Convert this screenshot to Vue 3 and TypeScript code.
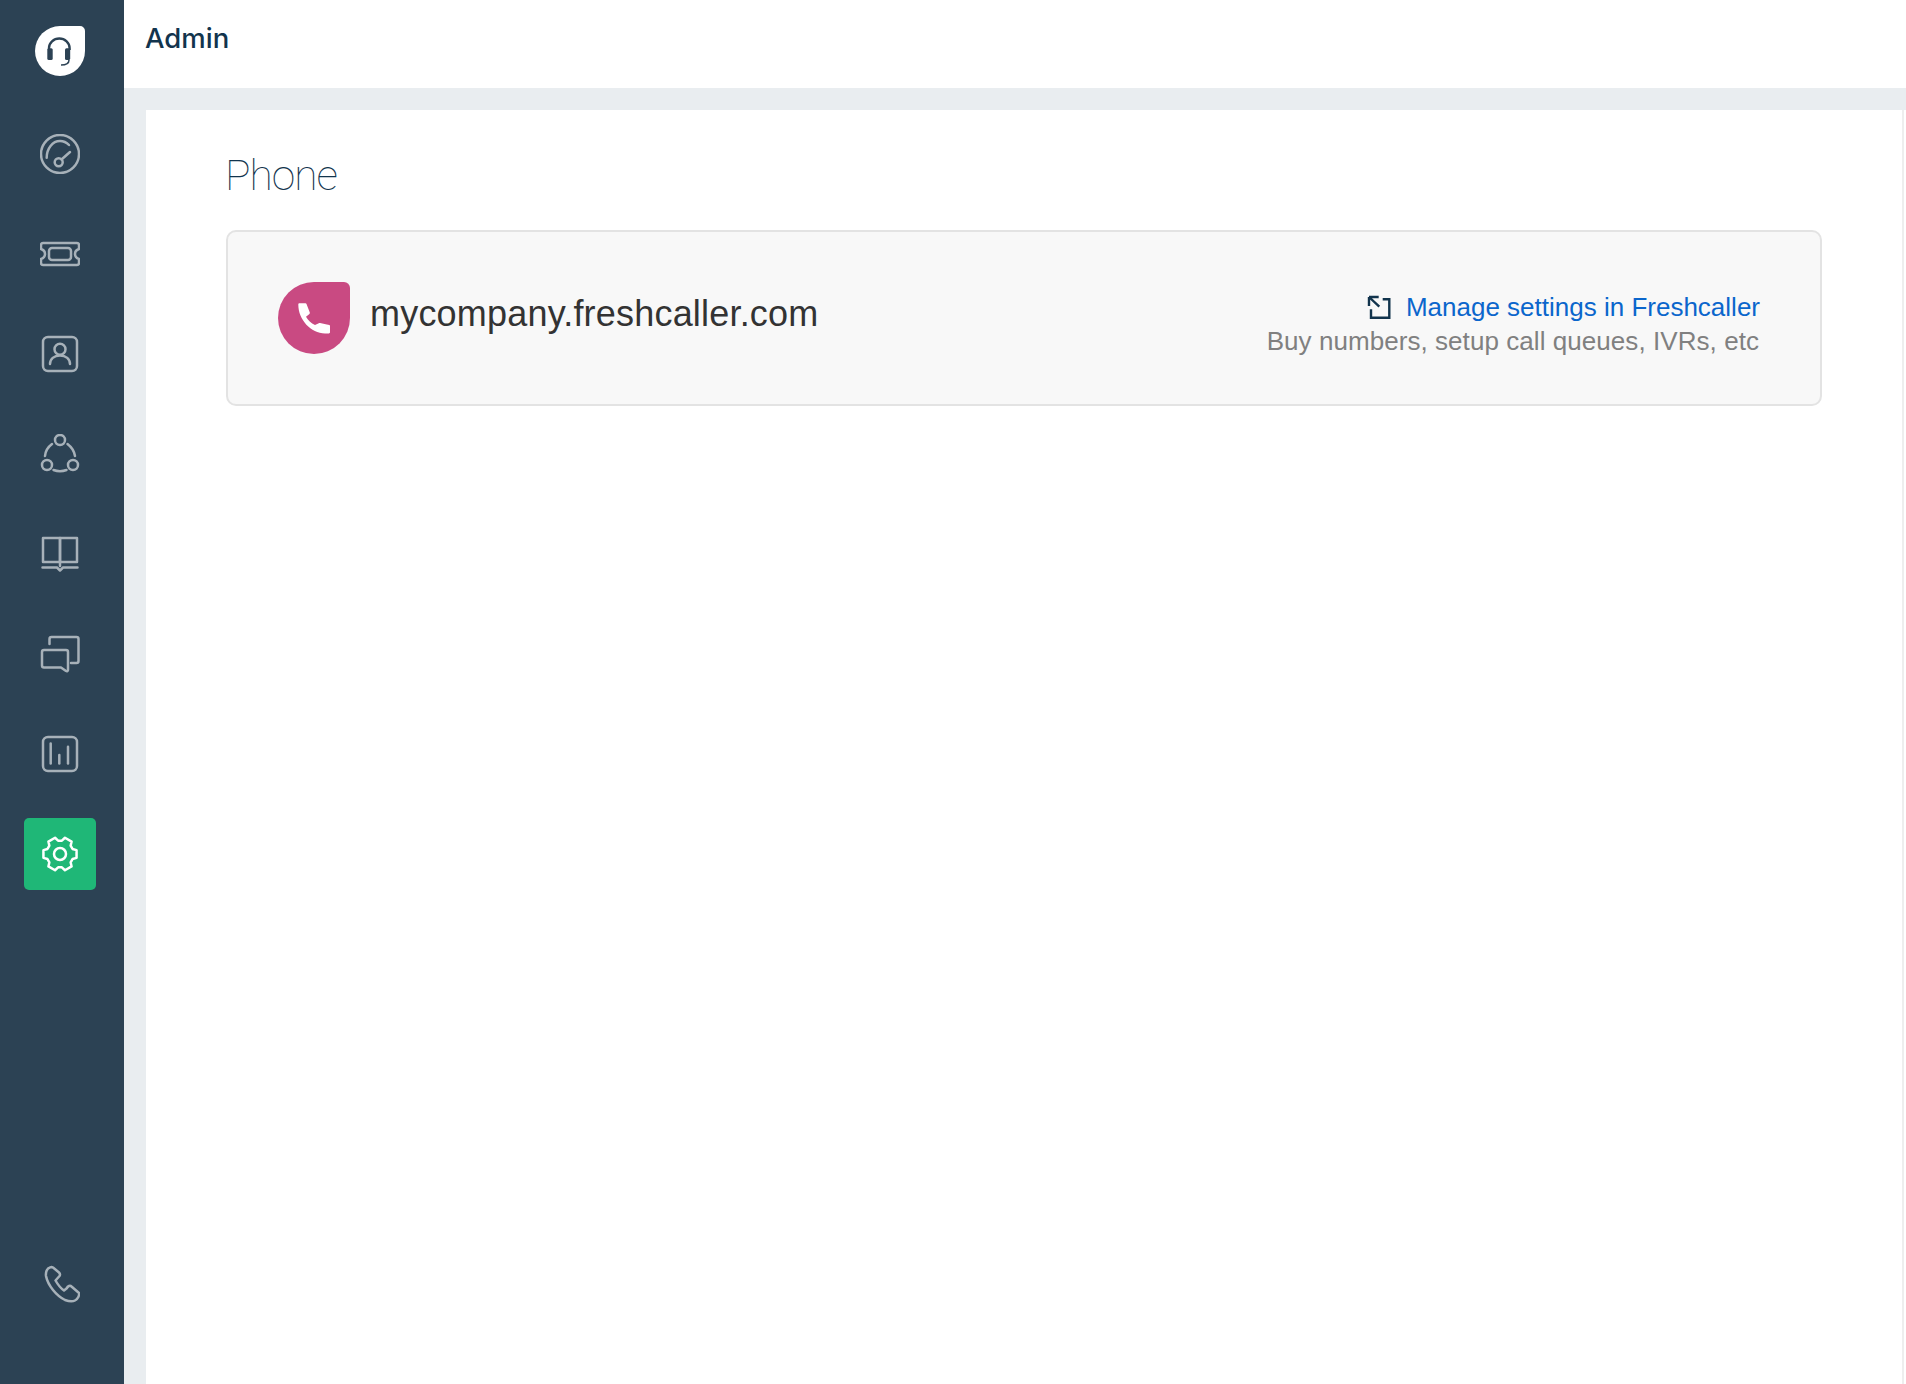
<script setup lang="ts">
const navItems: { id: string; paths: string[] }[] = [
  { id: 'gauge', paths: ['M20 1a19 19 0 1 0 0 38 19 19 0 0 0 0-38Z', 'M6.700 23.700C6.700 14.500 12.500 7 20 7c3.500 0 6.500 1.400 9 4', 'M18.700 24.300a4 4 0 1 0 0 8 4 4 0 0 0 0-8Z', 'M21.500 25.500 30 18'] },
  { id: 'ticket', paths: ['M3 9h34a2 2 0 0 1 2 2v4c-3 1-4 3-4 5s1 4 4 5v4a2 2 0 0 1-2 2H3a2 2 0 0 1-2-2v-4c3-1 4-3 4-5s-1-4-4-5v-4a2 2 0 0 1 2-2Z', 'M12 14h16a3 3 0 0 1 3 3v6a3 3 0 0 1-3 3H12a3 3 0 0 1-3-3v-6a3 3 0 0 1 3-3Z'] },
  { id: 'contact', paths: ['M8 3h24a5 5 0 0 1 5 5v24a5 5 0 0 1-5 5H8a5 5 0 0 1-5-5V8a5 5 0 0 1 5-5Z', 'M20 9.800a5.500 5.500 0 1 0 0 11 5.500 5.500 0 0 0 0-11Z', 'M10 30c0-5 4-8.500 10-8.500s10 3.500 10 8.500'] },
  { id: 'team', paths: ['M20 1a5 5 0 1 0 0 10 5 5 0 0 0 0-10Z', 'M7 26a5 5 0 1 0 0 10 5 5 0 0 0 0-10Z', 'M33 26a5 5 0 1 0 0 10 5 5 0 0 0 0-10Z', 'M5 22c.4-4.800 3-9 7-12', 'M27.500 10c4 3 6.700 7.200 7.500 12', 'M13.500 36c4 1.400 9 1.400 13 0'] },
  { id: 'book', paths: ['M3 4h17v24H3Z', 'M20 4h17v24H20Z', 'M20 28v4', 'M2.500 33.500H17l3 3 3-3h14.500'] },
  { id: 'chat', paths: ['M9.500 10V5a2 2 0 0 1 2-2h25a2 2 0 0 1 2 2v22a2 2 0 0 1-2 2H31', 'M4 16h22a2 2 0 0 1 2 2v18c0 1-1 1.500-2 1l-5-3.500H4a2 2 0 0 1-2-2V18a2 2 0 0 1 2-2Z'] },
  { id: 'report', paths: ['M8 3h24a5 5 0 0 1 5 5v24a5 5 0 0 1-5 5H8a5 5 0 0 1-5-5V8a5 5 0 0 1 5-5Z', 'M10.700 9.500v20', 'M19.300 21v8.500', 'M28 12.700v16.800'] },
]

function polar(radius: number, degrees: number): string {
  const rad = (degrees * Math.PI) / 180
  return `${(20 + radius * Math.cos(rad)).toFixed(2)} ${(20 + radius * Math.sin(rad)).toFixed(2)}`
}

function buildGear(): string {
  const parts: string[] = []
  for (let i = 0; i < 6; i++) {
    const a = i * 60
    parts.push(`${i === 0 ? 'M' : 'L'}${polar(17, a - 13)}`)
    parts.push(`L${polar(17, a + 13)}`)
    parts.push(`L${polar(13.5, a + 22)}`)
    parts.push(`L${polar(13.5, a + 38)}`)
  }
  return parts.join(' ') + ' Z'
}
const gearPath = buildGear()
</script>

<template>
  <div class="app">
    <aside class="sidebar">
      <div class="brand">
        <svg class="brand-mark" viewBox="0 0 50 50" width="50" height="50">
          <path d="M25 0h20a5 5 0 0 1 5 5v20a25 25 0 0 1-50 0A25 25 0 0 1 25 0Z" fill="#fff" />
          <path d="M14 24v-2a10.300 9.500 0 0 1 20.600 0v2" fill="none" stroke="#2c4254" stroke-width="2.400" />
          <rect x="12.300" y="22.300" width="5.400" height="11.700" rx="1.500" fill="#2c4254" />
          <rect x="30" y="22.300" width="5.200" height="11.700" rx="1.500" fill="#2c4254" />
          <path d="M34 34c0 3-2 5-8 5" fill="none" stroke="#2c4254" stroke-width="1.500" />
        </svg>
      </div>
      <nav class="nav">
        <div v-for="item in navItems" :key="item.id" class="nav-item">
          <svg class="nav-icon" viewBox="0 0 40 40" width="40" height="40">
            <path v-for="d in item.paths" :key="d" :d="d" />
          </svg>
        </div>
        <div class="nav-item">
          <span class="active-box">
            <svg class="nav-icon" viewBox="0 0 40 40" width="40" height="40">
              <path :d="gearPath" />
              <circle cx="20" cy="20" r="6" />
            </svg>
          </span>
        </div>
      </nav>
      <div class="call">
        <svg class="nav-icon" viewBox="0 0 40 40" width="40" height="40">
          <path d="M10 3.500C7 4 5.500 8 6 12c1 5 3 9 7 14s8 8 12 10c4 1.500 8 1.500 10 .5 3-1.500 4.500-5.500 4-7.500l-7.500-6.500c-1.500-1.500-3.500-.5-5 2L24 26.500c-3-2-6.500-6.500-8.500-10l4-4.500c1-1.500.5-2.500-.5-3.500l-6-5c-1-.5-2-.5-3 0Z" />
        </svg>
      </div>
    </aside>
    <main class="main">
      <header class="topbar">
        <h1 class="topbar-title">Admin</h1>
      </header>
      <section class="body">
        <div class="panel">
          <h2 class="panel-title">Phone</h2>
          <div class="card">
            <div class="account">
              <svg class="account-mark" viewBox="0 0 72 72" width="72" height="72">
                <path d="M36 0h30a6 6 0 0 1 6 6v30a36 36 0 0 1-72 0A36 36 0 0 1 36 0Z" fill="#c94a82" />
                <path d="M21.500 21.300h6c.5 0 .8.300 1 .8l3.300 8.500c.2.500 0 1-.4 1.300L28 34.700c2 3.600 5 6.500 9 8.300l3.800-1.800c.4-.2.800-.2 1.200-.1l9.200 1.800c.5.100.8.500.8 1v6.400c0 .7-.5 1.200-1.200 1.200h-3.800C33 51 20.300 38 20.300 22.500c0-.7.500-1.200 1.200-1.200Z" fill="#fff" />
              </svg>
              <span class="account-name">mycompany.freshcaller.com</span>
            </div>
            <div class="manage">
              <a class="manage-link" href="#" @click.prevent>
                <svg class="external" viewBox="0 0 24 24" width="24" height="24">
                  <path d="M15.700 4.300H22.300V22.700H4V14.300" />
                  <path d="M2 2l10.300 9.700M2 2h9.700M2 2v9" />
                </svg>
                <span>Manage settings in Freshcaller</span>
              </a>
              <p class="manage-note">Buy numbers, setup call queues, IVRs, etc</p>
            </div>
          </div>
        </div>
      </section>
    </main>
  </div>
</template>

<style scoped>
.app {
  display: flex;
  min-height: 1384px;
  font-family: "Liberation Sans", Arial, sans-serif;
  background: #fff;
}
.sidebar {
  width: 124px;
  flex: none;
  box-sizing: border-box;
  padding-right: 4px;
  background: #2c4254;
  display: flex;
  flex-direction: column;
  align-items: center;
}
.brand {
  height: 104px;
  padding-top: 26px;
  box-sizing: border-box;
}
.brand-mark {
  display: block;
}
.nav {
  display: flex;
  flex-direction: column;
  width: 100%;
}
.nav-item {
  height: 100px;
  display: flex;
  align-items: center;
  justify-content: center;
}
.nav-icon {
  display: block;
  fill: none;
  stroke: #a7b1b9;
  stroke-width: 2.5;
  stroke-linecap: round;
  stroke-linejoin: round;
}
.active-box {
  width: 72px;
  height: 72px;
  border-radius: 5px;
  background: #1fb777;
  display: flex;
  align-items: center;
  justify-content: center;
}
.active-box .nav-icon {
  stroke: #fff;
}
.call {
  margin-top: auto;
  padding-bottom: 80px;
}
.main {
  flex: 1;
  min-width: 0;
  display: flex;
  flex-direction: column;
}
.topbar {
  height: 88px;
  flex: none;
  padding-left: 21px;
  display: flex;
  align-items: center;
  background: #fff;
}
.topbar-title {
  margin: 0 0 12px;
  font-family: Inter, "Liberation Sans", sans-serif;
  font-size: 27.5px;
  font-weight: 550;
  color: #12344d;
}
.body {
  flex: 1;
  display: flex;
  padding: 22px 0 0 22px;
  background: #e9edf0;
}
.panel {
  flex: 1;
  margin-right: 2px;
  padding: 36px 80px 0;
  background: #fff;
  border-right: 2px solid #eeeeee;
  box-shadow: 2px 0 0 #fff;
}
.panel-title {
  margin: 0 0 24px -1px;
  font-family: Roboto, "Liberation Sans", sans-serif;
  font-size: 42.5px;
  line-height: 60px;
  font-weight: 100;
  letter-spacing: -1px;
  color: #12344d;
}
.card {
  height: 176px;
  box-sizing: border-box;
  border: 2px solid #e3e3e3;
  border-radius: 10px;
  background: #f8f8f8;
  display: flex;
  align-items: center;
  justify-content: space-between;
  padding: 0 60px 0 50px;
}
.account {
  display: flex;
  align-items: center;
  gap: 20px;
}
.account-mark {
  display: block;
}
.account-name {
  margin-bottom: 8px;
  font-size: 36px;
  letter-spacing: 0.2px;
  color: #333;
}
.manage {
  padding-top: 12px;
  text-align: right;
}
.manage-link {
  display: inline-flex;
  align-items: center;
  gap: 15px;
  font-size: 26px;
  line-height: 34px;
  color: #0b66cc;
  text-decoration: none;
}
.external {
  display: block;
  fill: none;
  stroke: #12344d;
  stroke-width: 2.4;
}
.manage-note {
  margin: 0 1px 0 0;
  font-size: 26px;
  line-height: 34px;
  letter-spacing: 0.06px;
  color: #808080;
}
</style>

<style>
html,
body {
  margin: 0;
  background: #fff;
}
</style>
